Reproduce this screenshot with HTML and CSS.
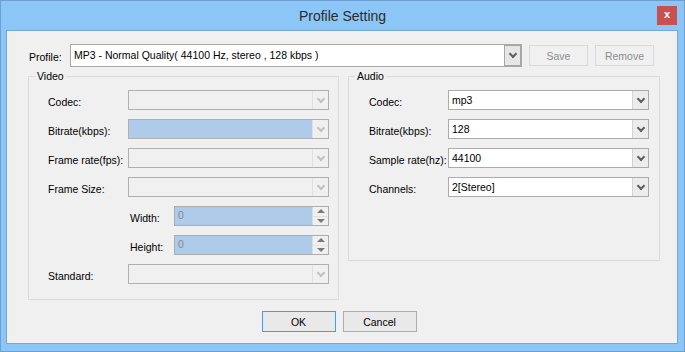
FILE: index.html
```html
<!DOCTYPE html>
<html lang="en">
<head>
  <meta charset="UTF-8" />
  <title>Profile Setting</title>
  <link rel="stylesheet" href="styles.css">
</head>
<body>
  <div class="window">
    <div class="titlebar">
      <span></span>
      <div class="title">Profile Setting</div>
      <div class="close">x</div>
    </div>

    <div class="client">
      <div class="profile-row">
        <label>Profile:</label>
        <div class="combo profile">
          <span class="value">MP3 - Normal Quality( 44100 Hz, stereo , 128 kbps )</span>
          <span class="arrow"></span>
        </div>
        <button class="btn disabled">Save</button>
        <button class="btn disabled">Remove</button>
      </div>

      <div class="groups">
        <fieldset class="group video">
          <legend>Video</legend>
          <div class="rows">
            <div class="field">
              <label>Codec:</label>
              <div class="combo off"><span class="value"></span><span class="arrow"></span></div>
            </div>
            <div class="field">
              <label>Bitrate(kbps):</label>
              <div class="combo off sel"><span class="value"></span><span class="arrow"></span></div>
            </div>
            <div class="field">
              <label>Frame rate(fps):</label>
              <div class="combo off"><span class="value"></span><span class="arrow"></span></div>
            </div>
            <div class="field">
              <label>Frame Size:</label>
              <div class="combo off"><span class="value"></span><span class="arrow"></span></div>
            </div>
            <div class="field sub">
              <label>Width:</label>
              <div class="spin"><span class="value">0</span><span class="spin-btns"><i class="up"></i><i class="down"></i></span></div>
            </div>
            <div class="field sub">
              <label>Height:</label>
              <div class="spin"><span class="value">0</span><span class="spin-btns"><i class="up"></i><i class="down"></i></span></div>
            </div>
            <div class="field">
              <label>Standard:</label>
              <div class="combo off"><span class="value"></span><span class="arrow"></span></div>
            </div>
          </div>
        </fieldset>

        <fieldset class="group audio">
          <legend>Audio</legend>
          <div class="rows">
            <div class="field">
              <label>Codec:</label>
              <div class="combo"><span class="value">mp3</span><span class="arrow"></span></div>
            </div>
            <div class="field">
              <label>Bitrate(kbps):</label>
              <div class="combo"><span class="value">128</span><span class="arrow"></span></div>
            </div>
            <div class="field">
              <label>Sample rate(hz):</label>
              <div class="combo"><span class="value">44100</span><span class="arrow"></span></div>
            </div>
            <div class="field">
              <label>Channels:</label>
              <div class="combo"><span class="value">2[Stereo]</span><span class="arrow"></span></div>
            </div>
          </div>
        </fieldset>
      </div>

      <div class="actions">
        <button class="btn default">OK</button>
        <button class="btn">Cancel</button>
      </div>
    </div>
  </div>
</body>
</html>
```

FILE: styles.css
```css
* {
  box-sizing: border-box;
}
body {
  margin: 0;
  width: 685px;
  height: 352px;
  overflow: hidden;
  font-family: "Liberation Sans", Arial, sans-serif;
  font-size: 10.5px;
  color: #000;
}
.window {
  height: 352px;
  display: flex;
  flex-direction: column;
  background: #8bc6f7;
  border: 1px solid #6d9fd1;
}
.titlebar {
  height: 29px;
  display: grid;
  grid-template-columns: 1fr auto 1fr;
  align-items: start;
}
.title {
  font-size: 14px;
  color: #2b2b2b;
  padding-top: 7px;
}
.close {
  justify-self: end;
  margin: 5px 7px 0 0;
  width: 20px;
  height: 19px;
  background: #c75050;
  color: #fff;
  font-weight: bold;
  font-size: 11px;
  line-height: 17px;
  text-align: center;
}
.client {
  flex: 1;
  margin: 0 6px 7px 5px;
  background: #f0f0f0;
  border: 1px solid #74a6d8;
  padding: 13px 0 0 21px;
  display: flex;
  flex-direction: column;
}
label {
  white-space: nowrap;
}

/* profile row */
.profile-row {
  display: flex;
  align-items: center;
  height: 23px;
}
.profile-row label {
  width: 42px;
  padding-left: 1px;
  padding-top: 3px;
}
.combo.profile {
  width: 452px;
  height: 23px;
  margin-right: 7px;
  border-color: #a9a9a9;
}
.combo.profile .arrow {
  width: 17px;
  border: 1px solid #a6a6a6;
  background: #e6e6e6;
}

/* buttons */
.btn {
  font: inherit;
  width: 59px;
  height: 21px;
  padding: 0;
  margin-right: 7px;
  background: #e9e9e9;
  border: 1px solid #adadad;
  color: #000;
}
.btn.disabled {
  background: #f0f0f0;
  border-color: #d9d9d9;
  color: #8d8d8d;
}
.btn.default {
  border-color: #3c9ef5;
}

/* group boxes */
.groups {
  display: flex;
  align-items: flex-start;
  gap: 9px;
  margin-top: 3px;
}
.group {
  margin: 0;
  min-width: 0;
  padding: 0;
  border: 1px solid #dcdcdc;
}
.group legend {
  margin-left: 6px;
  padding: 0 2px;
  line-height: 13px;
}
.rows {
  display: flex;
  flex-direction: column;
  gap: 9px;
}
.video {
  width: 311px;
}
.video .rows {
  padding: 7px 9px 15px 19px;
}
.audio {
  width: 312px;
}
.audio .rows {
  padding: 7px 10px 63px 20px;
}
.field {
  display: flex;
  align-items: center;
  height: 20px;
}
.field label {
  width: 80px;
  padding-top: 3px;
}
.audio .field label {
  width: 79px;
}
.field.sub {
  padding-left: 82px;
}
.field.sub label {
  width: 44px;
  padding-top: 4px;
}

/* combo boxes */
.combo {
  display: flex;
  width: 201px;
  height: 20px;
  border: 1px solid #ababab;
  background: #fff;
}
.combo .value {
  flex: 1;
  padding: 1px 3px 0;
  line-height: 16px;
  white-space: nowrap;
  overflow: hidden;
}
.combo.profile .value {
  line-height: 19px;
}
.arrow {
  width: 16px;
  display: flex;
  align-items: center;
  justify-content: center;
  background: #ececec;
  border-left: 1px solid #d4d4d4;
}
.arrow::after {
  content: "";
  width: 4px;
  height: 4px;
  margin-top: -3px;
  border: solid #5f5f5f;
  border-width: 0 2px 2px 0;
  transform: rotate(45deg);
}
.combo.off {
  background: #f0f0f0;
  border-color: #b0b0b0;
}
.combo.off .arrow {
  background: #f0f0f0;
  border-left-color: #e0e0e0;
}
.combo.off .arrow::after {
  border-color: #c2c2c2;
}
.combo.sel .value {
  background: #aecbea;
}

/* spin boxes */
.spin {
  display: flex;
  width: 155px;
  height: 20px;
  border: 1px solid #adadad;
  background: #aecbea;
}
.spin .value {
  flex: 1;
  padding: 2px 3px 0;
  color: #8a8a8a;
}
.spin-btns {
  width: 16px;
  display: flex;
  flex-direction: column;
  background: #f0f0f0;
  border-left: 1px solid #dcdcdc;
}
.spin-btns i {
  flex: 1;
  display: flex;
  align-items: center;
  justify-content: center;
}
.spin-btns i.up {
  border-bottom: 1px solid #e2e2e2;
}
.spin-btns i::after {
  content: "";
  border-left: 4px solid transparent;
  border-right: 4px solid transparent;
}
.spin-btns i.up::after {
  border-bottom: 4px solid #7a7a7a;
}
.spin-btns i.down::after {
  border-top: 4px solid #7a7a7a;
}

/* dialog buttons */
.actions {
  display: flex;
  justify-content: center;
  margin-top: 11px;
  padding-right: 26px;
}
.actions .btn {
  width: 74px;
  margin: 0 4px 0 3px;
}
```
